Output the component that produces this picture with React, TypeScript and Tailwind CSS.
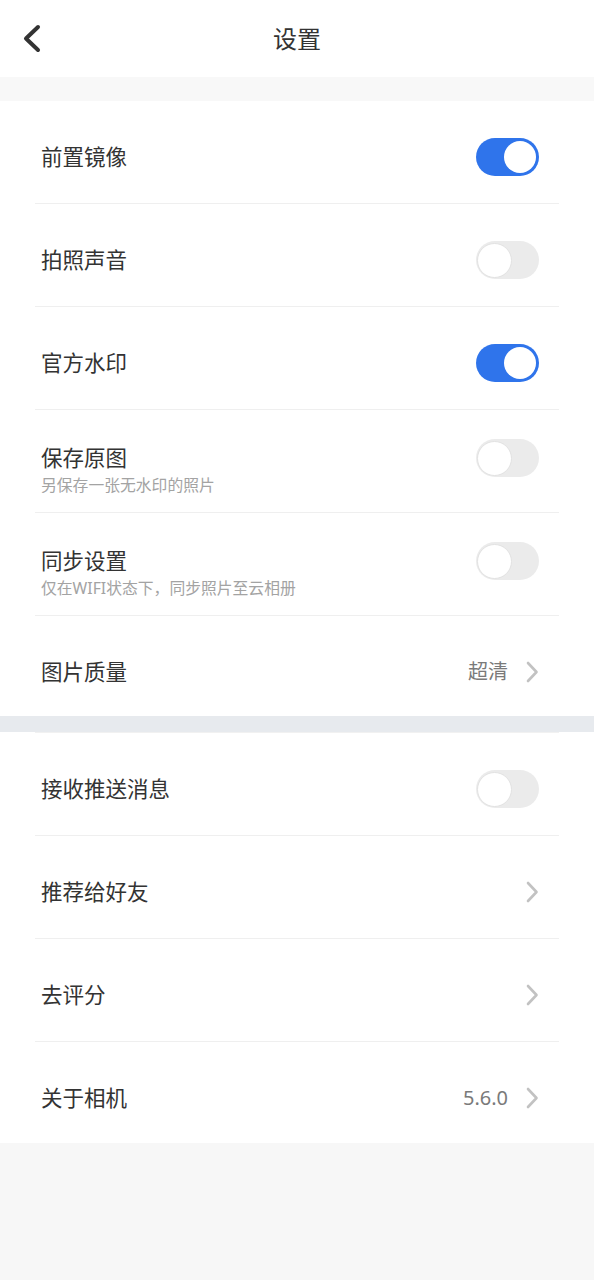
import React from "react";

type Row = {
  label: string;
  sub?: string;
  toggle?: boolean;
  value?: string;
  arrow?: boolean;
};

const groupOne: Row[] = [
  { label: "前置镜像", toggle: true },
  { label: "拍照声音", toggle: false },
  { label: "官方水印", toggle: true },
  { label: "保存原图", sub: "另保存一张无水印的照片", toggle: false },
  { label: "同步设置", sub: "仅在WIFI状态下，同步照片至云相册", toggle: false },
  { label: "图片质量", value: "超清", arrow: true },
];

const groupTwo: Row[] = [
  { label: "接收推送消息", toggle: false },
  { label: "推荐给好友", arrow: true },
  { label: "去评分", arrow: true },
  { label: "关于相机", value: "5.6.0", arrow: true },
];

function Toggle({ on }: { on: boolean }) {
  return on ? (
    <div className="flex h-[38px] w-[63px] shrink-0 items-center justify-end rounded-full bg-[#2f74eb] pr-[3px]">
      <div className="h-[32px] w-[32px] rounded-full bg-white" />
    </div>
  ) : (
    <div className="flex h-[38px] w-[63px] shrink-0 items-center rounded-full bg-[#ebebeb] pl-[1px]">
      <div className="h-[35px] w-[35px] rounded-full border border-[#e2e2e2] bg-white" />
    </div>
  );
}

function Chevron() {
  return (
    <svg width="14" height="22" viewBox="0 0 14 22" className="shrink-0">
      <polyline
        points="3,2 11.5,11 3,20"
        fill="none"
        stroke="#c2c2c2"
        strokeWidth="2.6"
        strokeLinecap="round"
        strokeLinejoin="round"
      />
    </svg>
  );
}

function SettingRow({ row, last, height }: { row: Row; last: boolean; height: string }) {
  return (
    <div className={`mx-[35px] ${last ? "" : "border-b border-[#efefef]"}`}>
      <div
        className={`flex ${height} items-start justify-between pl-[6px] pr-[20px] ${
          row.sub ? "pt-[29px]" : "pt-[37px]"
        }`}
      >
        {row.sub ? (
          <div className="mt-[5px] flex flex-col">
            <span className="text-[21.5px] leading-[28px] text-[#333333]">{row.label}</span>
            <span className="text-[15.8px] leading-[26px] text-[#a3a3a3]">{row.sub}</span>
          </div>
        ) : (
          <span className="text-[21.5px] leading-[38px] text-[#333333]">{row.label}</span>
        )}
        {row.toggle !== undefined ? (
          <Toggle on={row.toggle} />
        ) : (
          <div className="flex h-[38px] items-center">
            {row.value && (
              <span className="mr-[17px] text-[20px] text-[#7a7a7a]">{row.value}</span>
            )}
            {row.arrow && <Chevron />}
          </div>
        )}
      </div>
    </div>
  );
}

export default function App() {
  return (
    <div
      className="min-h-[1280px] w-full bg-[#f7f7f7]"
      style={{ fontFamily: '"Noto Sans", "Noto Sans CJK SC", sans-serif' }}
    >
      {/* Header */}
      <div className="relative flex h-[77px] items-center justify-center bg-white">
        <svg
          width="24"
          height="32"
          viewBox="0 0 24 32"
          className="absolute left-[20px] top-[23px]"
        >
          <polyline
            points="18,4 6,15.5 18,27"
            fill="none"
            stroke="#333333"
            strokeWidth="4"
            strokeLinecap="round"
            strokeLinejoin="round"
          />
        </svg>
        <span className="text-[24px] text-[#333333]">设置</span>
      </div>

      <div className="h-[24px] bg-[#f8f8f8]" />

      {/* Group one */}
      <div className="bg-white">
        {groupOne.map((row, i) => (
          <SettingRow
            key={row.label}
            row={row}
            last={i === groupOne.length - 1}
            height={i === groupOne.length - 1 ? "h-[100px]" : "h-[102px]"}
          />
        ))}
      </div>

      <div className="h-[16px] bg-[#e7eaee]" />

      {/* Group two */}
      <div className="bg-white">
        <div className="mx-[35px] border-t border-[#f1f1f1]" />
        {groupTwo.map((row, i) => (
          <SettingRow
            key={row.label}
            row={row}
            last={i === groupTwo.length - 1}
            height={i === groupTwo.length - 1 ? "h-[101px]" : "h-[102px]"}
          />
        ))}
      </div>
    </div>
  );
}
